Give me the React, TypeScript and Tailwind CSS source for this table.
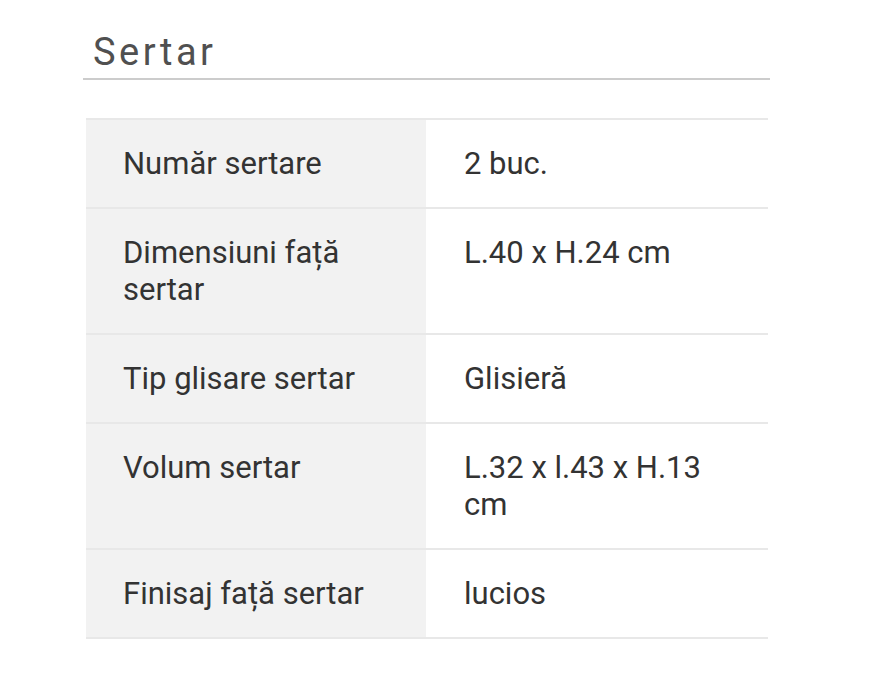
import React from "react";

const rows: [string, string][] = [
  ["Număr sertare", "2 buc."],
  ["Dimensiuni față sertar", "L.40 x H.24 cm"],
  ["Tip glisare sertar", "Glisieră"],
  ["Volum sertar", "L.32 x l.43 x H.13 cm"],
  ["Finisaj față sertar", "lucios"],
];

export default function App() {
  return (
    <div className="min-h-[700px] w-[878px] bg-white" style={{ fontFamily: "Roboto, 'Liberation Sans', sans-serif" }}>
      <div className="ml-[83px] w-[687px] pt-[30px]">
        <h2 className="border-b-2 border-[#cccccc] pl-[10px] pb-[4px] text-[38px] leading-[44px] tracking-[3.5px] text-[#505050]">
          Sertar
        </h2>
        <div className="ml-[3px] mt-[38px] w-[682px] border-t-2 border-[#e8e8e8]">
          {rows.map(([k, v]) => (
            <div key={k} className="flex border-b-2 border-[#e8e8e8] text-[31px] leading-[37px] text-[#333333]">
              <div className="w-[340px] shrink-0 bg-[#f2f2f2] py-[25px] pl-[37px] pr-[20px]">{k}</div>
              <div className="flex-1 py-[25px] pl-[38px] pr-[40px]">{v}</div>
            </div>
          ))}
        </div>
      </div>
    </div>
  );
}
